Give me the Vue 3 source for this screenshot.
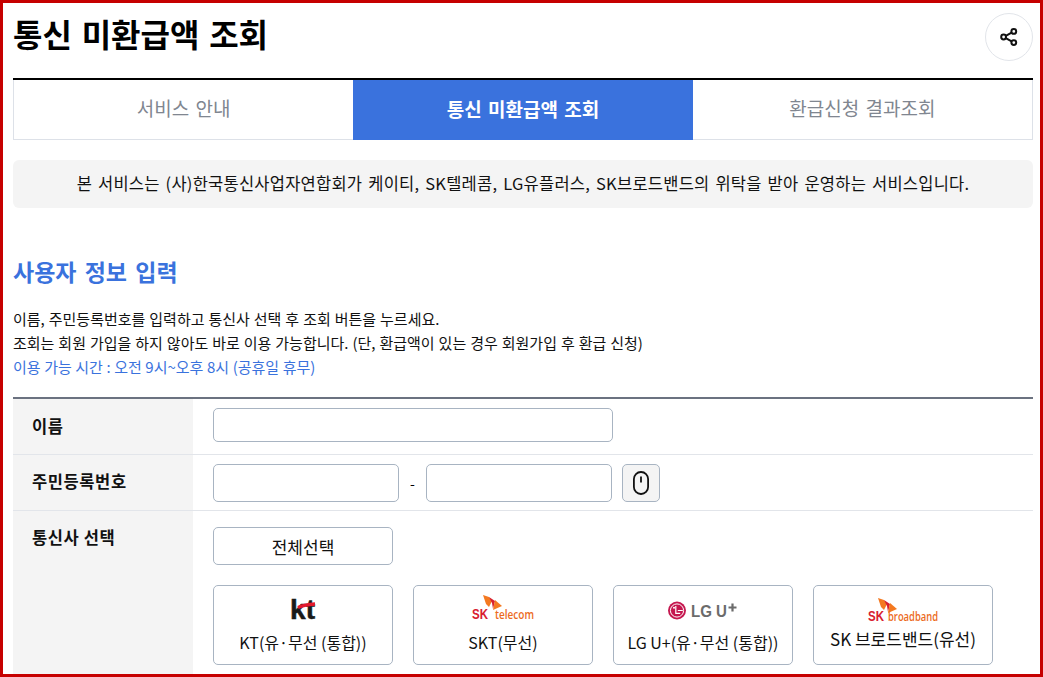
<script setup>
const tabs = [
  { label: '서비스 안내', active: false },
  { label: '통신 미환급액 조회', active: true },
  { label: '환급신청 결과조회', active: false }
]
</script>

<template>
  <div class="frame">
    <div class="page">
      <header class="head">
        <h1>통신 미환급액 조회</h1>
        <button class="share" aria-label="공유">
          <svg width="18" height="18" viewBox="0 0 18 18" fill="none" stroke="#111" stroke-width="2">
            <circle cx="13.8" cy="3.4" r="2.4" />
            <circle cx="3.6" cy="9" r="2.4" />
            <circle cx="13.8" cy="14.6" r="2.4" />
            <path d="M5.8 7.8 11.6 4.6M5.8 10.2l5.8 3.2" />
          </svg>
        </button>
      </header>

      <nav class="tabs">
        <div v-for="t in tabs" :key="t.label" class="tab" :class="{ on: t.active }"><span>{{ t.label }}</span></div>
      </nav>

      <div class="notice">본 서비스는 (사)한국통신사업자연합회가 케이티, SK텔레콤, LG유플러스, SK브로드밴드의 위탁을 받아 운영하는 서비스입니다.</div>

      <h2>사용자 정보 입력</h2>
      <div class="guide">
        <p>이름, 주민등록번호를 입력하고 통신사 선택 후 조회 버튼을 누르세요.</p>
        <p>조회는 회원 가입을 하지 않아도 바로 이용 가능합니다. (단, 환급액이 있는 경우 회원가입 후 환급 신청)</p>
        <p class="blue">이용 가능 시간 : 오전 9시~오후 8시 (공휴일 휴무)</p>
      </div>

      <div class="form">
        <div class="row r1">
          <div class="th">이름</div>
          <div class="td"><input class="in name" type="text" /></div>
        </div>
        <div class="row r2">
          <div class="th">주민등록번호</div>
          <div class="td">
            <input class="in rrn" type="text" />
            <span class="dash">-</span>
            <input class="in rrn" type="text" />
            <button class="mouse" aria-label="마우스 입력">
              <svg width="18" height="24" viewBox="0 0 18 24" fill="none" stroke="#111" stroke-width="1.8">
                <rect x="1.9" y="1" width="14.2" height="22" rx="7" />
                <path d="M9 5.5v6" />
              </svg>
            </button>
          </div>
        </div>
        <div class="row r3">
          <div class="th">통신사 선택</div>
          <div class="td col">
            <button class="all">전체선택</button>
            <div class="carriers">
              <button class="card">
                <span class="logo">
                  <svg width="80" height="30" viewBox="0 0 80 30">
                    <text x="27" y="25" class="kt" textLength="25" lengthAdjust="spacingAndGlyphs">kt</text>
                    <path d="M35 13.5Q42 10.5 52 10" fill="none" stroke="#e3192d" stroke-width="3.4" />
                  </svg>
                </span>
                <span class="name-l">KT(유·무선 (통합))</span>
              </button>
              <button class="card">
                <span class="logo">
                  <svg width="80" height="30" viewBox="0 0 80 30">
                    <g transform="translate(20 1)">
                      <path d="M0 0l6 2 3 4-3 6-3-3z" fill="#f47920" />
                      <path d="M6 2l6 4-2 8-1-6z" fill="#d8202f" />
                      <path d="M12 5l7 6-9 4z" fill="#f47920" />
                    </g>
                    <text x="9" y="25" class="sk" textLength="16" lengthAdjust="spacingAndGlyphs">SK</text>
                    <text x="32" y="25" class="sub" textLength="39" lengthAdjust="spacingAndGlyphs">telecom</text>
                  </svg>
                </span>
                <span class="name-l">SKT(무선)</span>
              </button>
              <button class="card">
                <span class="logo">
                  <svg width="80" height="30" viewBox="0 0 80 30">
                    <circle cx="14" cy="16.5" r="9" fill="#c5174f" />
                    <circle cx="14" cy="16.5" r="6.6" fill="none" stroke="#fff" stroke-width="1" />
                    <path d="M12.8 12v7.4h4.4M14.8 16.5h5" stroke="#fff" stroke-width="1.2" fill="none" />
                    <circle cx="11" cy="13.8" r="1" fill="#fff" />
                    <text x="28" y="22.5" class="lg" textLength="36" lengthAdjust="spacingAndGlyphs">LG U</text>
                    <path d="M65.5 13.5h8M69.5 9.5v8" stroke="#6b6b6b" stroke-width="2.2" />
                  </svg>
                </span>
                <span class="name-l">LG U+(유·무선 (통합))</span>
              </button>
              <button class="card sb">
                <span class="logo">
                  <svg width="100" height="30" viewBox="-10 0 100 30">
                    <g transform="translate(15 4)">
                      <path d="M0 0l6 2 3 4-3 6-3-3z" fill="#f47920" />
                      <path d="M6 2l6 4-2 8-1-6z" fill="#d8202f" />
                      <path d="M12 5l7 6-9 4z" fill="#f47920" />
                    </g>
                    <text x="5" y="27" class="sk" textLength="16" lengthAdjust="spacingAndGlyphs">SK</text>
                    <text x="25" y="27" class="sub" textLength="50" lengthAdjust="spacingAndGlyphs">broadband</text>
                  </svg>
                </span>
                <span class="name-l">SK 브로드밴드(유선)</span>
              </button>
            </div>
          </div>
        </div>
      </div>
    </div>
  </div>
</template>

<style>
html, body { margin: 0; overflow: hidden; background: #fff; }
</style>

<style scoped>
* { box-sizing: border-box; }
.frame {
  width: 1043px;
  height: 677px;
  border: 3px solid #c60000;
  overflow: hidden;
  background: #fff;
  font-family: "Noto Sans CJK KR", "Noto Sans", sans-serif;
  color: #111;
}
.page { padding: 0 7px 0 10px; }
.head { height: 75px; display: flex; justify-content: space-between; padding-top: 10px; }
h1 { margin: -2px 0 0; font-size: 32px; line-height: 44px; font-weight: 700; color: #000; word-spacing: 2.5px; }
.share {
  width: 48px; height: 48px; border: 1px solid #e2e5ea; border-radius: 50%;
  background: #fff; display: flex; align-items: center; justify-content: center; padding: 0;
}
.tabs { display: flex; border-top: 2px solid #000; }
.tab {
  flex: 1; height: 60px; display: flex; align-items: center; justify-content: center; padding-bottom: 4px;
  font-size: 19px; word-spacing: 2px; color: #808690; border: 1px solid #dde1e8; border-top: 0; border-right: 0;
}
.tab:last-child { border-right: 1px solid #dde1e8; border-left: 0; }
.tab.on { background: #3a72dd; color: #fff; font-weight: 700; border: 0; }
.notice {
  margin-top: 20px; height: 48px; border-radius: 6px; background: #f4f4f4; padding-bottom: 2px;
  display: flex; align-items: center; justify-content: center; font-size: 16.5px; word-spacing: 2px; letter-spacing: 0.24px; white-space: nowrap;
}
h2 { margin: 45px 0 0; font-size: 23px; line-height: 36px; font-weight: 700; color: #3a72dd; word-spacing: 3px; }
.guide { margin-top: 18px; font-size: 15px; line-height: 24px; word-spacing: 0.6px; }
.guide p { margin: 0; }
.blue { color: #3a72dd; word-spacing: 0.2px; }
.form { margin-top: 18px; border-top: 2px solid #6b7280; }
.row { display: flex; border-bottom: 1px solid #e2e5ea; }
.r1, .r2 { height: 56px; }
.th {
  width: 180px; flex: none; background: #f4f4f4; padding: 0 0 3px 19px;
  font-size: 16.5px; letter-spacing: 0.6px; font-weight: 700; display: flex; align-items: center;
}
.r1 .th { padding-bottom: 1px; }
.td { flex: 1; padding-left: 20px; display: flex; align-items: flex-start; padding-top: 9px; }
.r3 .th { align-items: flex-start; padding-top: 14px; }
.r3 { border-bottom: 0; }
.col { flex-direction: column; align-items: flex-start; padding-top: 16px; gap: 20px; padding-bottom: 20px; }
.in { height: 38px; border: 1px solid #a8b4c2; border-radius: 5px; background: #fff; outline: none; }
.name { width: 400px; height: 34px; }
.rrn { width: 186px; }
.dash { width: 27px; text-align: center; font-size: 14px; line-height: 38px; color: #000; }
.mouse {
  width: 38px; height: 38px; margin-left: 10px; border: 1px solid #a8b4c2; border-radius: 5px;
  background: #f4f4f4; padding: 0; display: flex; align-items: center; justify-content: center;
}
.all {
  width: 180px; height: 38px; border: 1px solid #a8b4c2; border-radius: 5px; background: #fff;
  font: 17px "Noto Sans CJK KR", sans-serif; color: #111; padding: 0;
}
.carriers { display: flex; gap: 20px; }
.card {
  width: 180px; height: 80px; border: 1px solid #a8b4c2; border-radius: 5px; background: #fff;
  font: 16px "Noto Sans CJK KR", sans-serif; color: #111; padding: 8px 0 0;
  display: flex; flex-direction: column; align-items: center;
}
.logo { height: 30px; display: block; }
.logo svg { display: block; }
.name-l { line-height: 24px; margin-top: 6px; white-space: nowrap; }
.sb .name-l { margin-top: 3px; font-size: 17px; }
.kt { font: 700 27px "Liberation Sans", sans-serif; fill: #1a1a1a; stroke: #1a1a1a; stroke-width: 0.5px; }
.sk { font: 700 15px "Liberation Sans", sans-serif; fill: #d8202f; }
.sub { font: 600 12px "Open Sans", sans-serif; fill: #ec6a1c; }
.lg { font: 700 16px "Liberation Sans", sans-serif; fill: #6b6b6b; }
</style>
